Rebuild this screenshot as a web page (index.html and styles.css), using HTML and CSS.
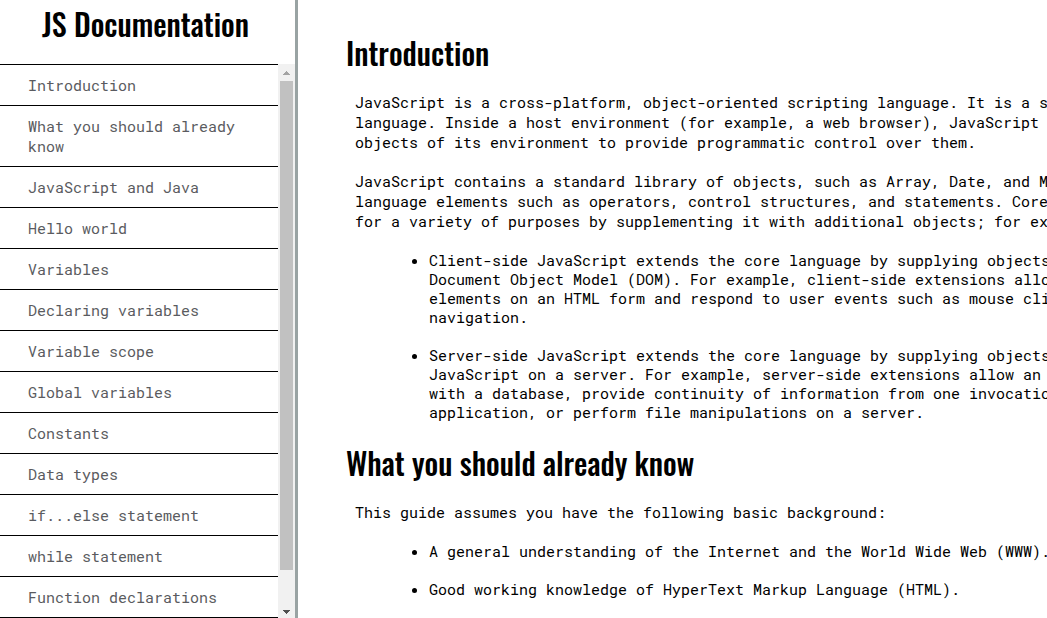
FILE: index.html
```html
<!DOCTYPE html>
<html lang="en">
<head>
<meta charset="utf-8">
<meta name="viewport" content="width=device-width, initial-scale=1">
<title>JS Documentation</title>
<link rel="stylesheet" href="styles.css">
</head>
<body>
<div class="page">
  <nav class="sidebar" aria-labelledby="site-title">
    <h1 class="site-title" id="site-title">JS Documentation</h1>
    <div class="nav-area">
      <ul class="nav-list">
        <li><a class="nav-link" href="#introduction">Introduction</a></li>
        <li><a class="nav-link" href="#prerequisites">What you should already know</a></li>
        <li><a class="nav-link" href="#java">JavaScript and Java</a></li>
        <li><a class="nav-link" href="#hello">Hello world</a></li>
        <li><a class="nav-link" href="#variables">Variables</a></li>
        <li><a class="nav-link" href="#declaring">Declaring variables</a></li>
        <li><a class="nav-link" href="#scope">Variable scope</a></li>
        <li><a class="nav-link" href="#global">Global variables</a></li>
        <li><a class="nav-link" href="#constants">Constants</a></li>
        <li><a class="nav-link" href="#types">Data types</a></li>
        <li><a class="nav-link" href="#ifelse">if...else statement</a></li>
        <li><a class="nav-link" href="#while">while statement</a></li>
        <li><a class="nav-link" href="#functions">Function declarations</a></li>
      </ul>
      <div class="scrollbar" aria-hidden="true">
        <svg class="arrow" viewBox="0 0 17 17" shape-rendering="crispEdges"><path fill="#a3a3a3" d="M8 7h1v1h1v1h1v1h1v1H5v-1h1V9h1V8h1z"/></svg>
        <div class="track"><div class="thumb"></div></div>
        <svg class="arrow" viewBox="0 0 17 17" shape-rendering="crispEdges"><path fill="#505050" d="M5 9h7v1h-1v1h-1v1H9v1H8v-1H7v-1H6v-1H5z"/></svg>
      </div>
    </div>
  </nav>
  <main class="content">
    <section id="introduction">
      <h2 class="heading">Introduction</h2>
      <p class="para">JavaScript is a cross-platform, object-oriented scripting language. It is a small and lightweight language. Inside a host environment (for example, a web browser), JavaScript can be connected to the objects of its environment to provide programmatic control over them.</p>
      <p class="para">JavaScript contains a standard library of objects, such as Array, Date, and Math, and a core set of language elements such as operators, control structures, and statements. Core JavaScript can be extended for a variety of purposes by supplementing it with additional objects; for example:</p>
      <ul class="points">
        <li>Client-side JavaScript extends the core language by supplying objects to control a browser and its Document Object Model (DOM). For example, client-side extensions allow an application to place elements on an HTML form and respond to user events such as mouse clicks, form input, and page navigation.</li>
        <li>Server-side JavaScript extends the core language by supplying objects relevant to running JavaScript on a server. For example, server-side extensions allow an application to communicate with a database, provide continuity of information from one invocation to another of the application, or perform file manipulations on a server.</li>
      </ul>
    </section>
    <section id="prerequisites">
      <h2 class="heading">What you should already know</h2>
      <p class="para">This guide assumes you have the following basic background:</p>
      <ul class="points">
        <li>A general understanding of the Internet and the World Wide Web (WWW).</li>
        <li>Good working knowledge of HyperText Markup Language (HTML).</li>
      </ul>
    </section>
  </main>
</div>
</body>
</html>
```
FILE: styles.css
```css
* { box-sizing: border-box; }

body {
  margin: 0;
  background: #fff;
  color: #000;
  font-family: "Roboto Mono", "Liberation Mono", monospace;
  font-size: 15px;
  font-weight: 400;
  line-height: 20px;
}

.page {
  display: flex;
  height: 100vh;
  overflow: hidden;
}

.sidebar {
  display: flex;
  flex-direction: column;
  flex: none;
  width: 298px;
  border-right: 3px solid #99a3a3;
}

.site-title,
.heading {
  margin: 0;
  font-family: Oswald, "Liberation Sans", sans-serif;
  font-size: 30px;
  font-weight: 500;
  line-height: 48px;
}

.site-title {
  padding: 0 4px 16px 0;
  text-align: center;
}

.nav-area {
  display: flex;
  flex: 1;
  min-height: 0;
}

.nav-list {
  flex: 1;
  margin: 0;
  padding: 0;
  overflow-y: auto;
  scrollbar-width: none;
  list-style: none;
  border-top: 1px solid #000;
}

.nav-link {
  display: block;
  padding: 10px 28px;
  border-bottom: 1px solid #000;
  color: #5a5b60;
  text-decoration: none;
}

.scrollbar {
  display: flex;
  flex-direction: column;
  flex: none;
  width: 17px;
  background: #f1f1f1;
}

.arrow {
  flex: none;
  width: 17px;
  height: 17px;
}

.track {
  flex: 1;
  padding: 0 2px;
}

.thumb {
  height: 94%;
  background: #c1c1c1;
}

.content {
  flex: 1;
  min-width: 0;
  padding: 29px 0 0 48px;
  overflow: hidden;
}

.heading { margin-bottom: 15px; }

.para {
  width: 960px;
  margin: 0 0 19px;
  padding-left: 9px;
}

.points {
  width: 980px;
  margin: 20px 0 17px;
  padding-left: 83px;
  line-height: 19px;
}

.points li + li { margin-top: 19px; }
```
